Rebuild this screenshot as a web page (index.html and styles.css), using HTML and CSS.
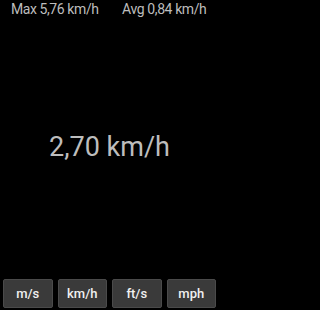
FILE: index.html
```html
<!DOCTYPE html>
<html>
<head>
<meta charset="utf-8">
<link rel="stylesheet" href="styles.css">
</head>
<body>
<div class="app">
  <div class="stats">
    <div class="stat">Max 5,76 km/h</div>
    <div class="stat">Avg 0,84 km/h</div>
  </div>
  <div class="speed">2,70 km/h</div>
  <div class="units">
    <button class="unit">m/s</button>
    <button class="unit">km/h</button>
    <button class="unit">ft/s</button>
    <button class="unit">mph</button>
  </div>
</div>
</body>
</html>
```
FILE: styles.css
```css
html, body {
  margin: 0;
  padding: 0;
  background: #000;
}
.app {
  width: 219px;
  height: 310px;
  display: flex;
  flex-direction: column;
  font-family: Roboto, "Liberation Sans", sans-serif;
  color: #bdbdbd;
}
.stats {
  display: flex;
  padding-top: 1px;
}
.stat {
  flex: 1;
  text-align: center;
  font-size: 14px;
  letter-spacing: -0.4px;
  line-height: 16px;
}
.speed {
  flex: 1;
  display: flex;
  align-items: center;
  justify-content: center;
  font-size: 27px;
  padding-bottom: 2px;
}
.units {
  display: flex;
  gap: 5px;
  padding: 0 3px 2px 3px;
}
.unit {
  flex: 1;
  height: 29px;
  margin: 0;
  padding: 0;
  background: #3a3a3a;
  border: 1px solid #4a4a4a;
  border-radius: 2px;
  color: #f0f0f0;
  font-family: Roboto, "Liberation Sans", sans-serif;
  font-size: 13px;
  font-weight: 500;
}
```
